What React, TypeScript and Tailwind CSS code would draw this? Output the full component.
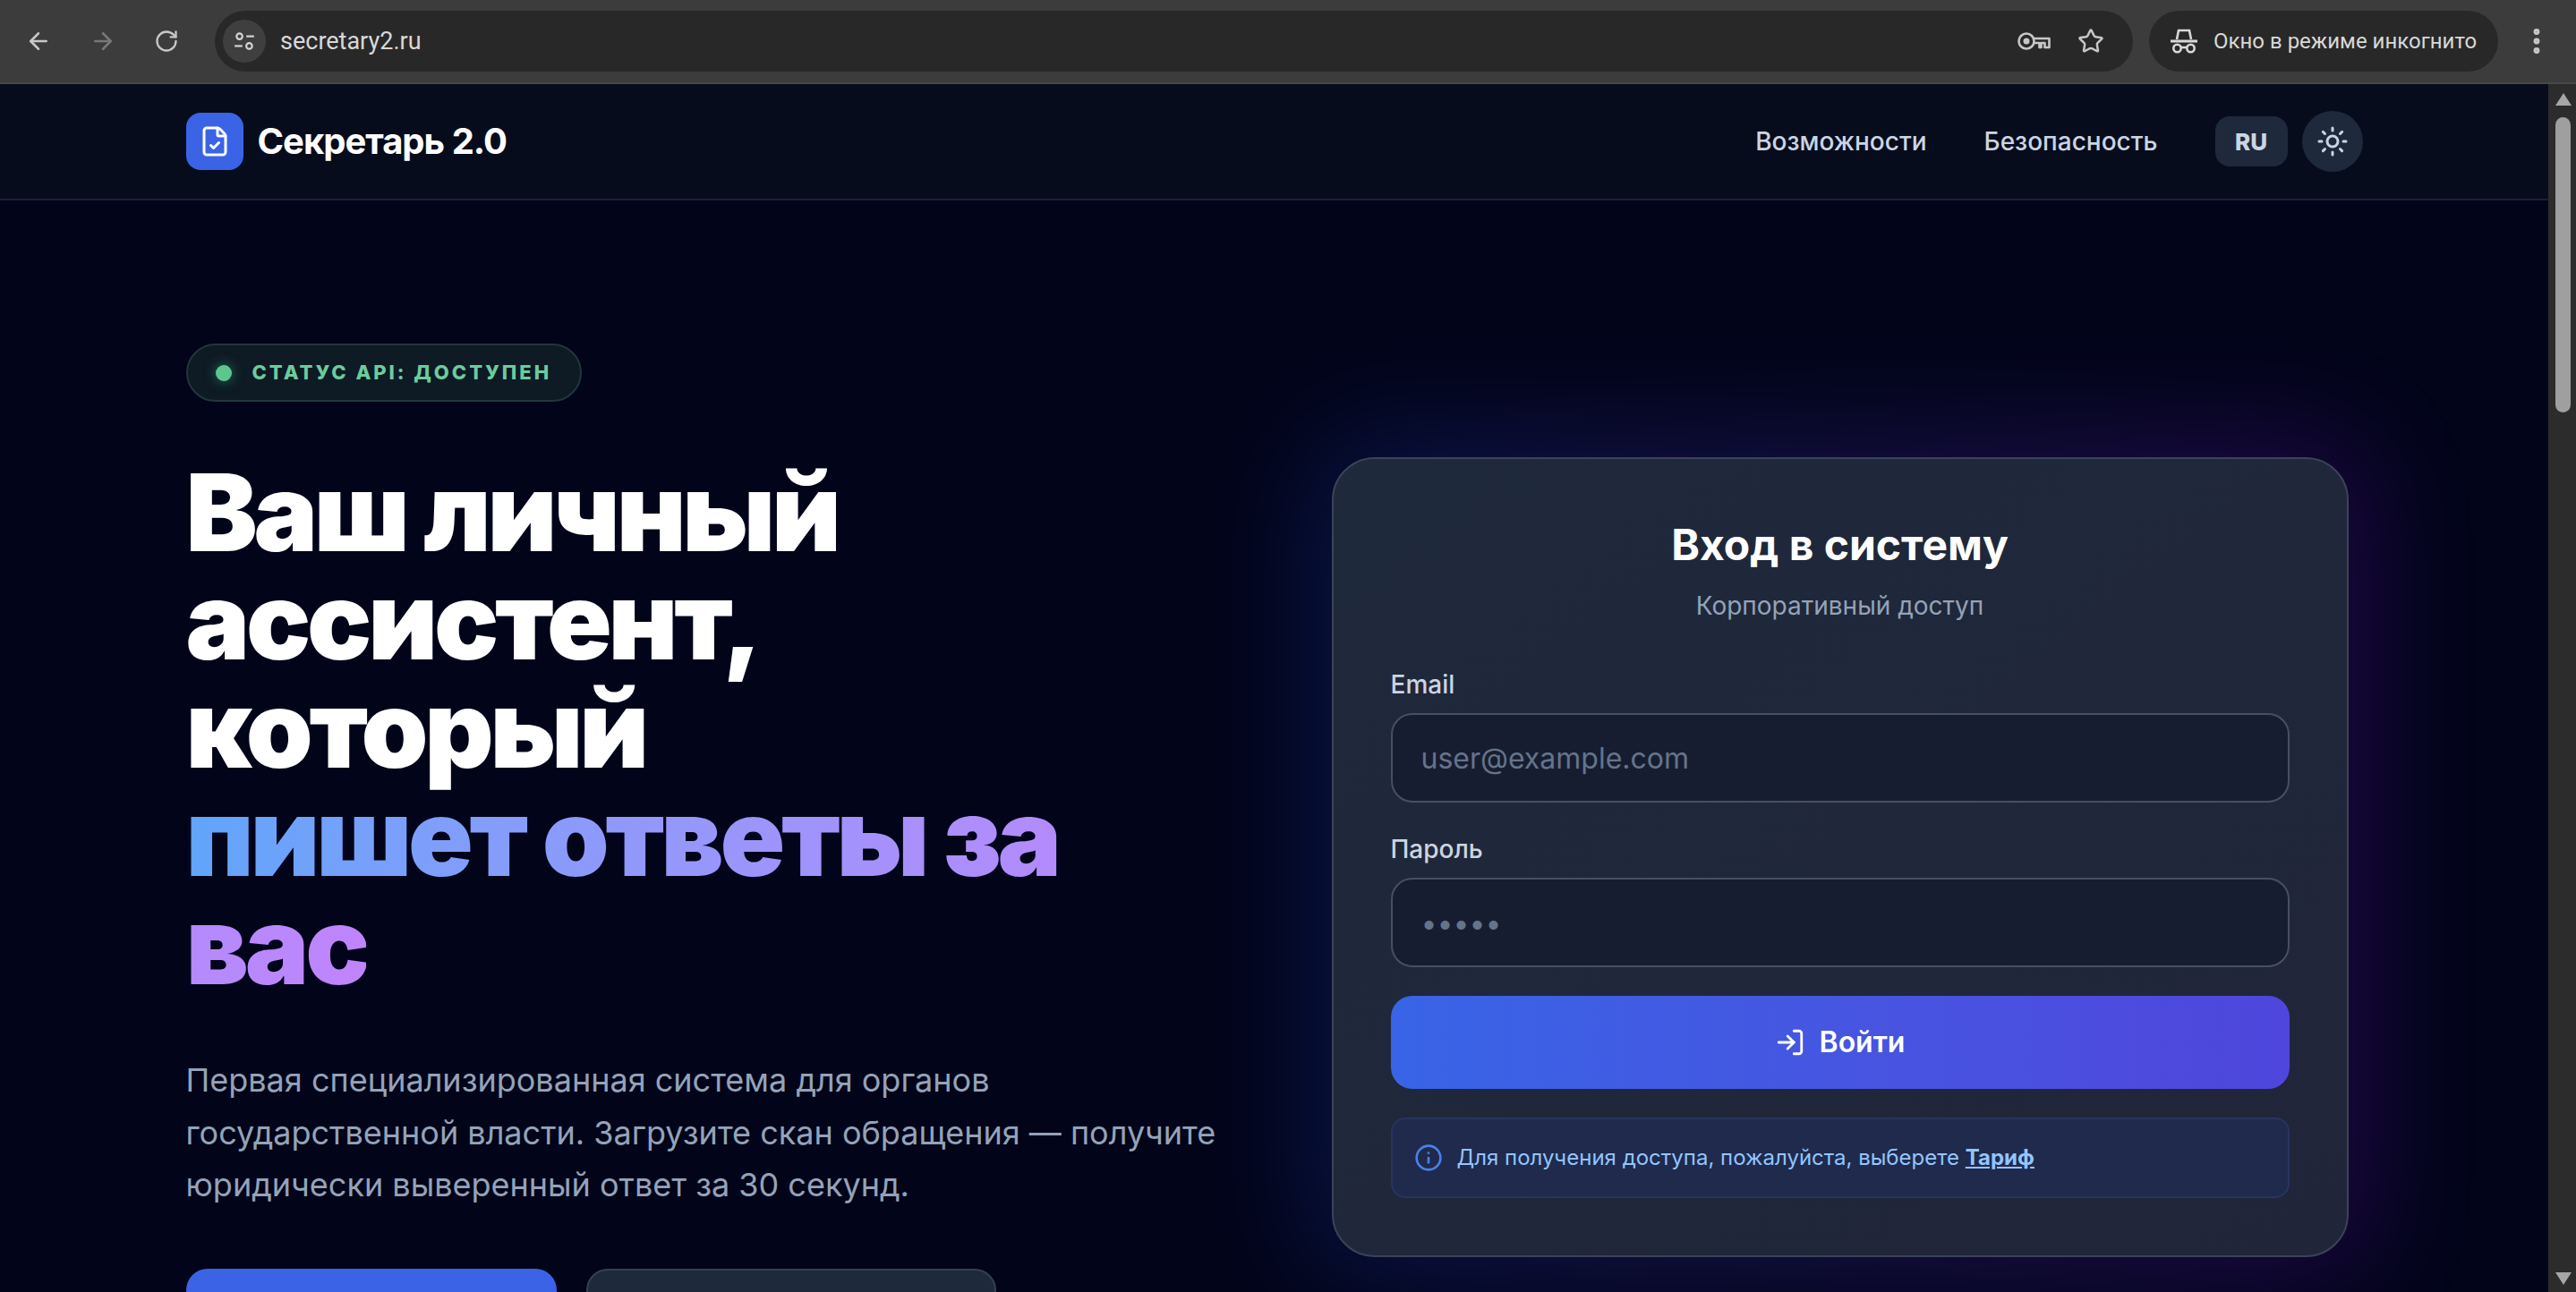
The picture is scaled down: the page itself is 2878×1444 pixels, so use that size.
import React from 'react';
import { ArrowLeft, ArrowRight, RotateCw, Star, FileCheck, Sun, LogIn, Info, EllipsisVertical } from 'lucide-react';

const TuneIcon: React.FC = () => (
  <svg viewBox="0 0 24 24" className="w-[26px] h-[26px]" fill="none" stroke="currentColor" strokeWidth="2">
    <circle cx="7" cy="7" r="3" />
    <path d="M14 7h8" />
    <circle cx="17" cy="17" r="3" />
    <path d="M2 17h8" />
  </svg>
);

const KeyIcon: React.FC = () => (
  <svg viewBox="0 0 37 22" className="w-[37px] h-[22px]" fill="none" stroke="currentColor" strokeWidth="2.6">
    <circle cx="10" cy="11" r="8.5" />
    <circle cx="10" cy="11" r="3.5" fill="currentColor" stroke="none" />
    <path d="M18.5 8h17v10h-5v-5h-4v5h-2v-5h-6" strokeLinejoin="round" />
  </svg>
);

const IncognitoIcon: React.FC = () => (
  <svg viewBox="0 0 30 28" className="w-[30px] h-[28px]" fill="none" stroke="currentColor" strokeWidth="2.6">
    <path d="M7 12L9 2h12l2 10" />
    <path d="M0 14h30" strokeWidth="3" />
    <circle cx="7.5" cy="22" r="4.2" />
    <circle cx="22.5" cy="22" r="4.2" />
    <path d="M11.5 21h7" />
  </svg>
);

const BrowserBar: React.FC = () => (
  <div className="h-[94px] shrink-0 bg-[#3c3c3c] border-b-2 border-[#484848] flex items-center rounded-t-[14px] font-[Roboto,sans-serif]">
    <div className="w-[240px] shrink-0 flex items-center pl-[28px] gap-[42px]">
      <ArrowLeft className="w-[30px] h-[30px] text-[#c7c7c7]" strokeWidth={2} />
      <ArrowRight className="w-[30px] h-[30px] text-[#787878]" strokeWidth={2} />
      <RotateCw className="w-[28px] h-[28px] text-[#c7c7c7]" strokeWidth={2} />
    </div>
    <div className="w-[2143px] h-[68px] rounded-full bg-[#282828] flex items-center pl-[9px] pr-[32px]">
      <div className="w-[48px] h-[48px] rounded-full bg-[#3f3f3f] flex items-center justify-center text-[#d5d5d5]">
        <TuneIcon />
      </div>
      <span className="ml-[16px] text-[27px] text-[#d8d8d8]">secretary2.ru</span>
      <div className="ml-auto flex items-center gap-[30px] text-[#c7c7c7]">
        <KeyIcon />
        <Star className="w-[30px] h-[30px]" strokeWidth={2} />
      </div>
    </div>
    <div className="ml-[18px] w-[390px] h-[68px] rounded-full bg-[#282828] flex items-center pl-[24px] text-[#d8d8d8]">
      <IncognitoIcon />
      <span className="ml-[18px] text-[24px] whitespace-nowrap">Окно в режиме инкогнито</span>
    </div>
    <EllipsisVertical className="ml-[25px] w-[36px] h-[36px] text-[#c7c7c7]" strokeWidth={2.6} />
  </div>
);

const Scrollbar: React.FC = () => (
  <div className="w-[31px] shrink-0 bg-[#2c2c2c] flex flex-col items-center pl-[2px] pt-[10px] pb-[8px]">
    <div className="w-0 h-0 border-x-[9px] border-x-transparent border-b-[14px] border-b-[#a6a6a6]" />
    <div className="mt-[13px] w-[17px] h-[330px] rounded-full bg-[#9f9f9f]" />
    <div className="mt-auto w-0 h-0 border-x-[9px] border-x-transparent border-t-[14px] border-t-[#a6a6a6]" />
  </div>
);

const App: React.FC = () => {
  return (
    <div className="w-full h-[1444px] overflow-hidden flex flex-col bg-[#3c3c3c] font-[Inter,sans-serif]">
      <BrowserBar />
      <div className="flex-1 min-h-0 flex">
        <div className="flex-1 min-w-0 bg-[#02041a] overflow-hidden">
          <nav className="h-[130px] bg-[#070c1d] border-b-2 border-[#1a2133]">
            <div className="w-[2432px] mx-auto h-full flex items-center">
              <div className="w-[64px] h-[64px] rounded-[16px] bg-[#3b63e6] flex items-center justify-center text-white">
                <FileCheck className="w-[36px] h-[36px]" strokeWidth={2} />
              </div>
              <span className="ml-[16px] text-[40px] font-bold tracking-tight text-white">Секретарь 2.0</span>
              <a className="ml-auto text-[28px] font-medium text-[#cbd5e1]">Возможности</a>
              <a className="ml-[64px] text-[28px] font-medium text-[#cbd5e1]">Безопасность</a>
              <button className="ml-[64px] w-[81px] h-[56px] rounded-[16px] bg-[#1e293b] text-[26px] font-extrabold text-[#cbd5e1]">RU</button>
              <button className="ml-[16px] w-[68px] h-[68px] rounded-full bg-[#1e293b] flex items-center justify-center text-[#cbd5e1]">
                <Sun className="w-[36px] h-[36px]" strokeWidth={2} />
              </button>
            </div>
          </nav>
          <main className="w-[2432px] mx-auto grid grid-cols-2 gap-[96px] pt-[160px]">
            <div>
              <div className="inline-flex items-center h-[65px] w-[442px] pl-[31px] rounded-full bg-[#0e1a24] border-2 border-[#21373a]">
                <span className="w-[18px] h-[18px] rounded-full bg-[#5ec58f] shadow-[0_0_14px_#34d39980]" />
                <span className="ml-[23px] text-[22px] font-extrabold tracking-[0.135em] uppercase text-[#6ccb9e]">Статус API: доступен</span>
              </div>
              <h1 className="mt-[63px] max-w-[1120px] text-[120px] leading-[121px] font-black tracking-[-0.035em] text-white">
                Ваш личный ассистент, который
                <br />
                <span className="bg-gradient-to-r from-[#60a5fa] to-[#c084fc] bg-clip-text text-transparent">пишет ответы за вас</span>
              </h1>
              <p className="mt-[61px] text-[36px] leading-[58.5px] text-[#94a3b8]">
                Первая специализированная система для органов государственной власти. Загрузите скан обращения — получите юридически выверенный ответ за 30 секунд.
              </p>
              <div className="mt-[64px] flex gap-[33px]">
                <div className="w-[414px] h-[100px] rounded-[24px] bg-[#3b63e6]" />
                <div className="w-[458px] h-[100px] rounded-[24px] bg-[#1e293b] border-2 border-[#334155]" />
              </div>
            </div>
            <div className="pt-[127px]">
              <div className="relative mx-auto w-[1136px] h-[894px]">
                <div className="absolute -inset-[16px] rounded-[48px] bg-gradient-to-r from-blue-600 to-purple-600 opacity-20 blur-[64px]" />
                <div className="relative h-full rounded-[48px] bg-gradient-to-br from-[#1e293b] to-[#21253a] border-2 border-[#3a4456] px-[64px] pt-[66px]">
                  <h2 className="h-[60px] leading-[60px] text-center text-[48px] font-bold text-white">Вход в систему</h2>
                  <p className="mt-[16px] h-[44px] leading-[44px] text-center text-[28px] text-[#94a3b8]">Корпоративный доступ</p>
                  <label className="block mt-[46px] h-[40px] leading-[40px] text-[28px] font-medium text-[#cbd5e1]">Email</label>
                  <input
                    className="block mt-[12px] w-full h-[100px] rounded-[24px] bg-[#171d30] border-2 border-[#465063] px-[32px] text-[32px] outline-none placeholder:text-[#64748b]"
                    placeholder="user@example.com"
                  />
                  <label className="block mt-[32px] h-[40px] leading-[40px] text-[28px] font-medium text-[#cbd5e1]">Пароль</label>
                  <input
                    className="block mt-[12px] w-full h-[100px] rounded-[24px] bg-[#171d30] border-2 border-[#465063] px-[32px] text-[32px] outline-none placeholder:text-[#64748b]"
                    placeholder="•••••"
                  />
                  <button className="mt-[32px] w-full h-[104px] rounded-[24px] bg-gradient-to-r from-[#3864e6] to-[#4f46dc] flex items-center justify-center gap-[16px] text-[32px] font-semibold text-white">
                    <LogIn className="w-[34px] h-[34px]" strokeWidth={2} />
                    Войти
                  </button>
                  <div className="mt-[32px] h-[90px] rounded-[16px] bg-[#1f2a4d] border-2 border-[#27355f] flex items-center pl-[24px] text-[24px] text-[#93c5fd]">
                    <Info className="w-[32px] h-[32px] text-[#4a80e8]" strokeWidth={2} />
                    <span className="ml-[16px]">
                      Для получения доступа, пожалуйста, выберете <a className="font-bold underline">Тариф</a>
                    </span>
                  </div>
                </div>
              </div>
            </div>
          </main>
        </div>
        <Scrollbar />
      </div>
    </div>
  );
};

export default App;
